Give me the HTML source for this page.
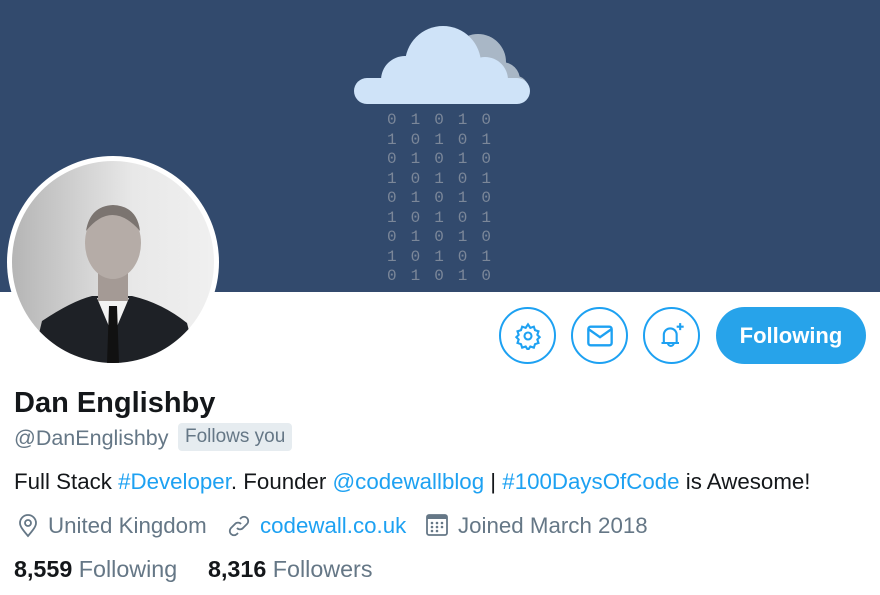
<!DOCTYPE html>
<html><head><style>
body{margin:0;width:880px;height:595px;background:#fff;font-family:"Liberation Sans",sans-serif;position:relative;overflow:hidden}
.banner{position:absolute;left:0;top:0;width:880px;height:292px;background:#324a6d}
.bin{position:absolute;font-family:"Liberation Mono",monospace;font-size:16px;color:#7b8799;line-height:19.5px;white-space:pre;left:387px;top:111px;letter-spacing:2.2px}
.av{position:absolute;left:7px;top:156px;width:212px;height:212px;border-radius:50%;background:#fff}
.av .in{position:absolute;left:5px;top:5px;width:202px;height:202px;border-radius:50%;overflow:hidden;background:linear-gradient(90deg,#b5b5b5,#e8e8e8 60%,#f0f0f0)}
.btn{position:absolute;top:307px;width:57px;height:57px;border:2px solid #1da1f2;border-radius:50%;box-sizing:border-box}
.btn svg{position:absolute;left:13px;top:13px}
.follow{position:absolute;left:716px;top:307px;width:150px;height:57px;border-radius:29px;background:#27a3ea;color:#fff;font-weight:bold;font-size:22px;text-align:center;line-height:57px}
.name{position:absolute;left:14px;top:387px;font-size:29px;font-weight:bold;color:#14171a}
.handle{position:absolute;left:14px;top:426px;font-size:21.5px;color:#657786}
.fy{position:absolute;left:178px;top:423px;background:#e6ecf0;color:#657786;font-size:19px;padding:3px 7px;border-radius:4px}
.bio{position:absolute;left:14px;top:469px;font-size:22.3px;color:#14171a}
.b{color:#1da1f2}
.meta{position:absolute;top:513px;font-size:22.3px;color:#657786}
.meta.b{color:#1da1f2}
.stats{position:absolute;top:556px;font-size:23.3px;color:#657786}
.stats b{color:#14171a}
</style></head><body>
<div class="banner"></div>
<svg style="position:absolute;left:350px;top:22px" width="185" height="85">
<circle cx="128" cy="40" r="28" fill="#a9b7c6"/><circle cx="152" cy="58" r="18" fill="#a9b7c6"/><circle cx="166" cy="66" r="12" fill="#a9b7c6"/>
<rect x="110" y="58" width="68" height="23" rx="11" fill="#a9b7c6"/>
<circle cx="93" cy="42" r="38" fill="#cfe3f8"/><circle cx="55" cy="58" r="24" fill="#cfe3f8"/><circle cx="135" cy="58" r="23" fill="#cfe3f8"/>
<rect x="4" y="56" width="176" height="26" rx="13" fill="#cfe3f8"/>
</svg>
<div class="bin">0 1 0 1 0
1 0 1 0 1
0 1 0 1 0
1 0 1 0 1
0 1 0 1 0
1 0 1 0 1
0 1 0 1 0
1 0 1 0 1
0 1 0 1 0</div>
<div class="av"><div class="in">
<svg width="202" height="202">
<path d="M20 202 L30 160 Q60 140 80 135 L120 135 Q150 142 175 162 L185 202Z" fill="#1e2126"/>
<path d="M85 137 L101 175 L117 137Z" fill="#f2f2f2"/>
<path d="M97 145 L105 145 L107 202 L95 202Z" fill="#111"/>
<rect x="86" y="105" width="30" height="35" fill="#a49a95"/>
<ellipse cx="101" cy="82" rx="28" ry="36" fill="#b5aca7"/>
<path d="M74 70 Q100 38 128 70 Q125 45 101 44 Q78 45 74 70Z" fill="#7b7470"/>
</svg></div></div>
<div class="btn" style="left:499px"><svg width="28" height="28" viewBox="0 0 24 24" fill="none" stroke="#1da1f2" stroke-width="1.8"><circle cx="12" cy="12" r="3"/><path d="M12 2l2 3 3-1 1 3 3 1-1 3 2 2-2 2 1 3-3 1-1 3-3-1-2 3-2-3-3 1-1-3-3-1 1-3-2-2 2-2-1-3 3-1 1-3 3 1z"/></svg></div>
<div class="btn" style="left:571px"><svg width="28" height="28" viewBox="0 0 24 24" fill="none" stroke="#1da1f2" stroke-width="2"><rect x="2" y="4" width="20" height="16" rx="2"/><path d="M2 6l10 7 10-7"/></svg></div>
<div class="btn" style="left:643px"><svg width="28" height="28" viewBox="0 0 24 24" fill="none" stroke="#1da1f2" stroke-width="1.8"><path d="M3 18h15M5 18v-7a5.5 5.5 0 0111 0v7M8.5 18a2.5 2.5 0 005 0M19 1v6M16 4h6"/></svg></div>
<div class="follow">Following</div>
<div class="name">Dan Englishby</div>
<div class="handle">@DanEnglishby</div>
<div class="fy">Follows you</div>
<div class="bio">Full Stack <span class="b">#Developer</span>. Founder <span class="b">@codewallblog</span> | <span class="b">#100DaysOfCode</span> is Awesome!</div>
<svg style="position:absolute;left:17px;top:514px" width="22" height="24" viewBox="0 0 22 24" fill="none" stroke="#657786" stroke-width="1.8"><path d="M11 22C5 15 3 12 3 9a8 8 0 0116 0c0 3-2 6-8 13z"/><circle cx="11" cy="9" r="3"/></svg>
<div class="meta" style="left:48px">United Kingdom</div>
<svg style="position:absolute;left:227px;top:514px" width="24" height="24" viewBox="0 0 24 24" fill="none" stroke="#657786" stroke-width="1.8"><path d="M10 14a4 4 0 006 0l4-4a4 4 0 00-6-6l-1 1M14 10a4 4 0 00-6 0l-4 4a4 4 0 006 6l1-1"/></svg>
<div class="meta b" style="left:260px">codewall.co.uk</div>
<svg style="position:absolute;left:426px;top:514px" width="22" height="22" viewBox="0 0 22 22" fill="#657786"><rect x="1" y="1" width="20" height="20" rx="2" fill="none" stroke="#657786" stroke-width="1.8"/><rect x="1" y="1" width="20" height="4"/><circle cx="6" cy="9" r="1.3"/><circle cx="11" cy="9" r="1.3"/><circle cx="16" cy="9" r="1.3"/><circle cx="6" cy="13" r="1.3"/><circle cx="11" cy="13" r="1.3"/><circle cx="16" cy="13" r="1.3"/><circle cx="6" cy="17" r="1.3"/><circle cx="11" cy="17" r="1.3"/></svg>
<div class="meta" style="left:458px">Joined March 2018</div>
<div class="stats" style="left:14px"><b>8,559</b> Following</div>
<div class="stats" style="left:208px"><b>8,316</b> Followers</div>
</body></html>
